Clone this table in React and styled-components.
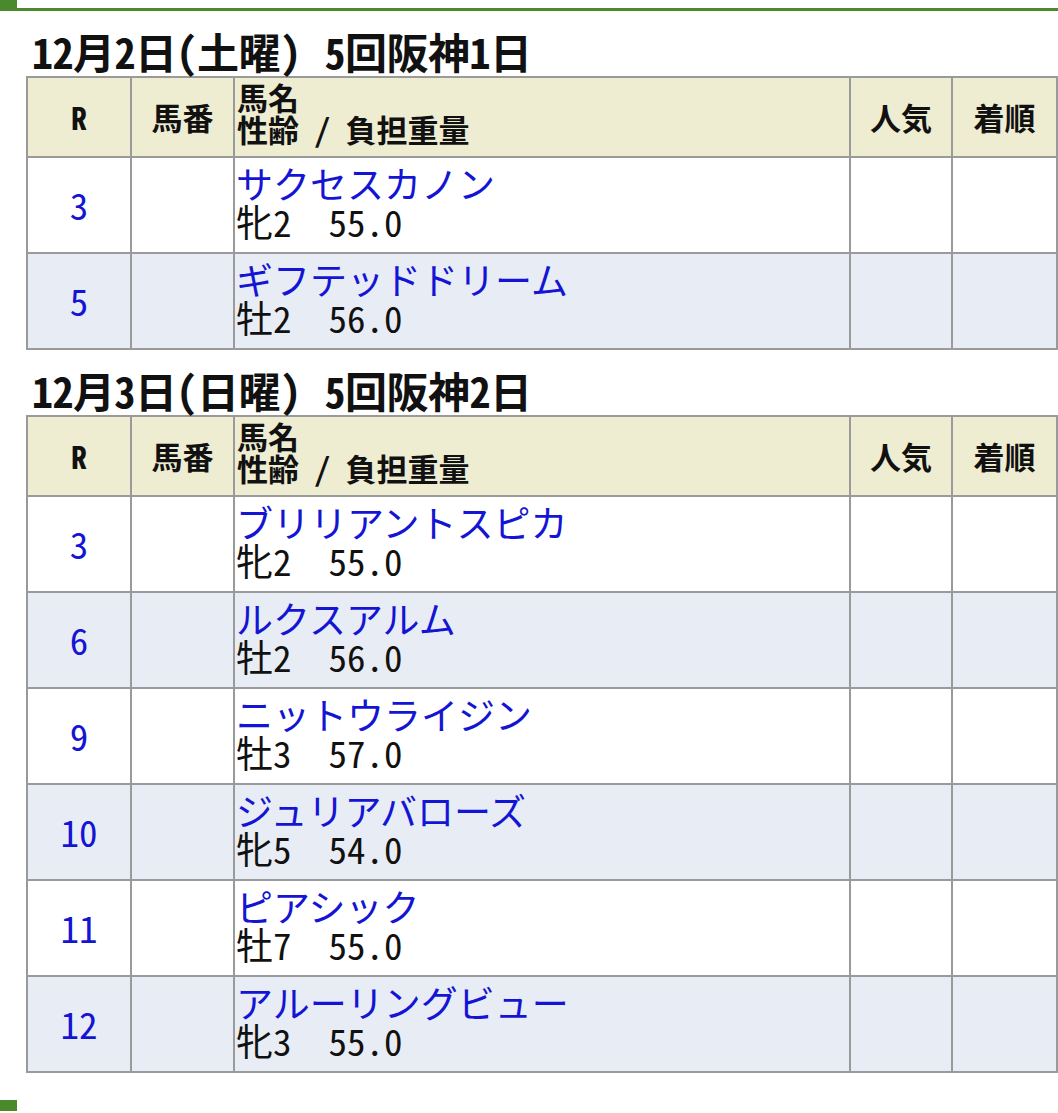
import React from 'react'
import styled, { createGlobalStyle } from 'styled-components'

const GlobalStyle = createGlobalStyle`
    body {
        margin: 0;
        background: #fff;
        font-family: "Noto Sans CJK JP", "Noto Sans", sans-serif;
        color: #111;
    }
`

const Page = styled.div`
    width: 1058px;
`

const TopBar = styled.div`
    position: relative;
    height: 8px;
    border-bottom: 3px solid #4b8a2c;
    &::before {
        content: "";
        position: absolute;
        left: 0;
        top: 0;
        width: 17px;
        height: 11px;
        background: #4b8a2c;
    }
`

const Content = styled.div`
    padding: 0 2px 0 26px;
`

const DayTitle = styled.h2`
    margin: 0;
    padding: 17px 0 0 6px;
    height: 48px;
    font-size: 42px;
    line-height: 45px;
    font-weight: 700;
    font-feature-settings: "hwid", "palt";
    letter-spacing: -0.5px;
    white-space: nowrap;
`

const Meeting = styled.span`
    margin-left: 24px;
`

const Table = styled.table`
    width: 1030px;
    border-collapse: collapse;
    table-layout: fixed;
`

const Th = styled.th`
    background: #eeecd1;
    border: 2px solid #9a9a9a;
    height: 78px;
    padding: 0;
    font-size: 31px;
    font-weight: 700;
    line-height: 32px;
    text-align: center;
    vertical-align: middle;
    font-feature-settings: "hwid";
`

const NameTh = styled(Th)`
    text-align: left;
    vertical-align: top;
    height: 75px;
    padding: 3px 0 0 2px;
`

const Row = styled.tr`
    background: ${p => (p.$alt ? '#e8ecf5' : '#fff')};
`

const Td = styled.td`
    border: 2px solid #9a9a9a;
    height: 94px;
    padding: 0;
    vertical-align: middle;
    text-align: center;
`

const RaceNo = styled.span`
    display: inline-block;
    color: #1414d4;
    font-size: 37px;
    line-height: 1;
    font-feature-settings: "hwid";
`

const NameCell = styled(Td)`
    text-align: left;
    height: 88px;
    padding: 6px 0 0 1px;
    vertical-align: top;
`

const HorseName = styled.a`
    display: block;
    color: #1414d4;
    text-decoration: none;
    font-size: 37px;
    line-height: 38px;
`

const Info = styled.div`
    font-size: 37px;
    line-height: 38px;
    font-feature-settings: "hwid";
    white-space: nowrap;
    color: #111;
`

const Weight = styled.span`
    margin-left: 1em;
`

const BottomMark = styled.div`
    margin-top: 27px;
    width: 17px;
    height: 11px;
    background: #4b8a2c;
`

const days = [
    {
        date: '12月2日（土曜）',
        meeting: '5回阪神1日',
        rows: [
            { r: 3, name: 'サクセスカノン', sex: '牝2', weight: '55.0' },
            { r: 5, name: 'ギフテッドドリーム', sex: '牡2', weight: '56.0' },
        ],
    },
    {
        date: '12月3日（日曜）',
        meeting: '5回阪神2日',
        rows: [
            { r: 3, name: 'ブリリアントスピカ', sex: '牝2', weight: '55.0' },
            { r: 6, name: 'ルクスアルム', sex: '牡2', weight: '56.0' },
            { r: 9, name: 'ニットウライジン', sex: '牡3', weight: '57.0' },
            { r: 10, name: 'ジュリアバローズ', sex: '牝5', weight: '54.0' },
            { r: 11, name: 'ピアシック', sex: '牡7', weight: '55.0' },
            { r: 12, name: 'アルーリングビュー', sex: '牝3', weight: '55.0' },
        ],
    },
]

function DayTable({ day }) {
    return (
        <>
            <DayTitle>
                {day.date}
                <Meeting>{day.meeting}</Meeting>
            </DayTitle>
            <Table>
                <colgroup>
                    <col style={{ width: 104 }} />
                    <col style={{ width: 103 }} />
                    <col style={{ width: 616 }} />
                    <col style={{ width: 102 }} />
                    <col style={{ width: 105 }} />
                </colgroup>
                <thead>
                    <tr>
                        <Th>R</Th>
                        <Th>馬番</Th>
                        <NameTh>馬名<br />性齢 / 負担重量</NameTh>
                        <Th>人気</Th>
                        <Th>着順</Th>
                    </tr>
                </thead>
                <tbody>
                    {day.rows.map((row, i) => (
                        <Row key={i} $alt={i % 2 === 1}>
                            <Td><RaceNo>{row.r}</RaceNo></Td>
                            <Td></Td>
                            <NameCell>
                                <HorseName href="#">{row.name}</HorseName>
                                <Info>
                                    {row.sex}
                                    <Weight>{row.weight}</Weight>
                                </Info>
                            </NameCell>
                            <Td></Td>
                            <Td></Td>
                        </Row>
                    ))}
                </tbody>
            </Table>
        </>
    )
}

export default function App() {
    return (
        <Page>
            <GlobalStyle />
            <TopBar />
            <Content>
                {days.map((day, i) => (
                    <DayTable key={i} day={day} />
                ))}
            </Content>
            <BottomMark />
        </Page>
    )
}
